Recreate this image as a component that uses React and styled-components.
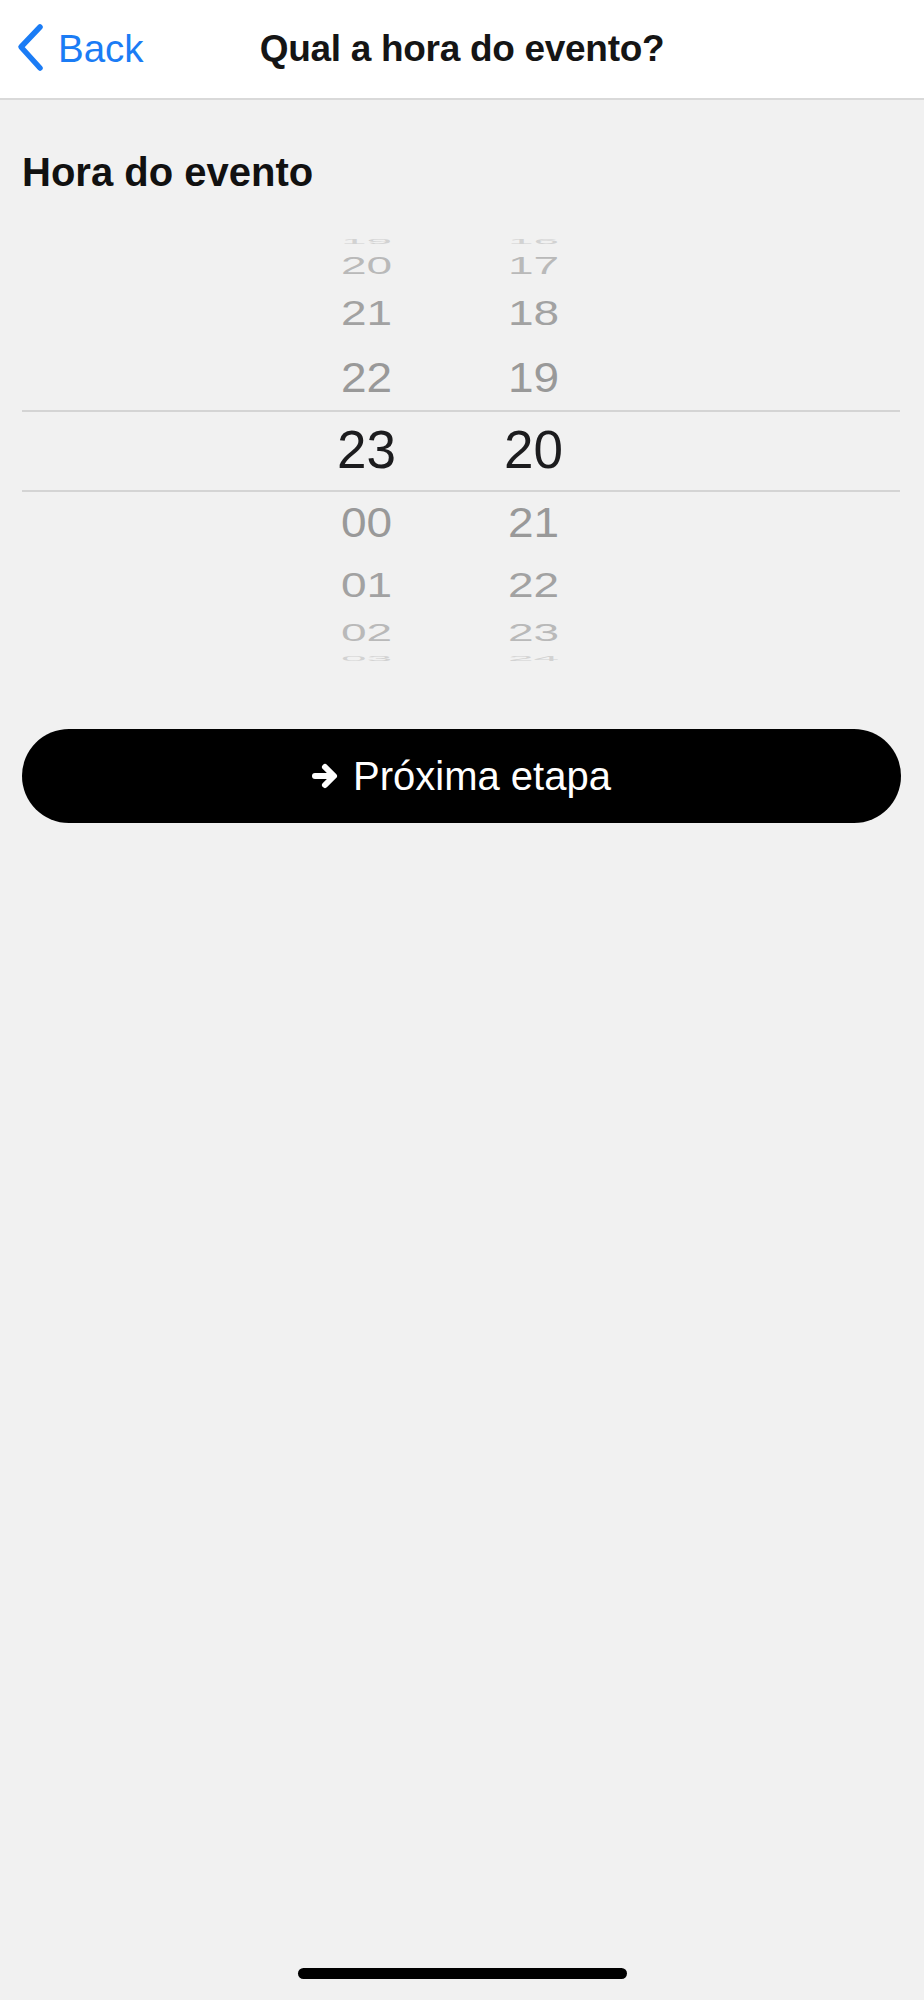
import React from "react";
import styled, { createGlobalStyle } from "styled-components";

const R = 215;
const STEP = 20;
const rad = (d) => (d * Math.PI) / 180;
const clamp = (v) => Math.max(-90, Math.min(90, v));

const hours = ["19", "20", "21", "22", "23", "00", "01", "02", "03"];
const minutes = ["16", "17", "18", "19", "20", "21", "22", "23", "24"];
const shades = ["#1c1c1e", "#999999", "#a2a2a2", "#b9b9b9", "#d2d2d2"];

export default function App() {
  const renderWheel = (values) =>
    values.map((v, idx) => {
      const i = idx - 4;
      const top = R * Math.sin(rad(clamp((i - 0.5) * STEP)));
      const bottom = R * Math.sin(rad(clamp((i + 0.5) * STEP)));
      const h = bottom - top;
      const tilt = Math.cos(rad(i * STEP));
      return (
        <WheelItem
          key={v}
          $selected={i === 0}
          $color={shades[Math.abs(i)]}
          style={{ height: h, lineHeight: h + "px", transform: `scaleY(${tilt})` }}
        >
          {v}
        </WheelItem>
      );
    });

  return (
    <>
      <GlobalStyle />
      <Screen>
        <NavBar>
          <BackButton>
            <svg width="30" height="50" viewBox="0 0 30 50">
              <polyline points="25,4 6,24 25,45" fill="none" stroke="#1b7cf5" strokeWidth="5.5" strokeLinecap="round" strokeLinejoin="round" />
            </svg>
            <span>Back</span>
          </BackButton>
          <NavTitle>Qual a hora do evento?</NavTitle>
          <div />
        </NavBar>

        <SectionTitle>Hora do evento</SectionTitle>

        <Picker>
          <SelectionBand />
          <Wheels>
            <Wheel>{renderWheel(hours)}</Wheel>
            <Wheel>{renderWheel(minutes)}</Wheel>
          </Wheels>
        </Picker>

        <NextButton>
          <svg width="27" height="28" viewBox="0 0 27 28">
            <line x1="3" y1="14" x2="20" y2="14" stroke="#ffffff" strokeWidth="6" strokeLinecap="round" />
            <polyline points="13,5 22,14 13,23" fill="none" stroke="#ffffff" strokeWidth="6" strokeLinecap="round" strokeLinejoin="round" />
          </svg>
          <span>Próxima etapa</span>
        </NextButton>

        <HomeIndicator />
      </Screen>
    </>
  );
}

const GlobalStyle = createGlobalStyle`
  body {
    margin: 0;
    background: #f1f1f1;
    font-family: "Liberation Sans", Arial, sans-serif;
  }
`;

const Screen = styled.div`
  display: flex;
  flex-direction: column;
  min-height: 100vh;
  background: #f1f1f1;
`;

const NavBar = styled.header`
  display: grid;
  grid-template-columns: 1fr auto 1fr;
  align-items: center;
  height: 98px;
  background: #ffffff;
  border-bottom: 2px solid #d9d9d9;
`;

const BackButton = styled.div`
  display: flex;
  align-items: center;
  gap: 13px;
  padding-left: 15px;
  color: #1b7cf5;
  font-size: 38.5px;

  svg {
    margin-top: -2px;
  }
`;

const NavTitle = styled.h1`
  margin: 0;
  font-size: 37px;
  font-weight: 700;
  color: #151515;
  letter-spacing: -0.3px;
`;

const SectionTitle = styled.h2`
  margin: 49px 0 0 22px;
  font-size: 40px;
  line-height: 46px;
  font-weight: 700;
  color: #111111;
`;

const Picker = styled.div`
  position: relative;
  margin: 40px 24px 0 22px;
  height: 430px;
`;

const SelectionBand = styled.div`
  position: absolute;
  left: 0;
  right: 0;
  top: 175px;
  height: 78px;
  border-top: 2px solid #d4d4d4;
  border-bottom: 2px solid #d4d4d4;
`;

const Wheels = styled.div`
  display: flex;
  justify-content: center;
  gap: 47px;
  padding-right: 22px;
`;

const Wheel = styled.div`
  display: flex;
  flex-direction: column;
  width: 120px;
`;

const WheelItem = styled.div`
  text-align: center;
  white-space: nowrap;
  font-size: ${(p) => (p.$selected ? "53px" : "46px")};
  color: ${(p) => p.$color};
  transform-origin: center;
`;

const NextButton = styled.button`
  display: flex;
  align-items: center;
  justify-content: center;
  gap: 14px;
  margin: 64px 23px 0 22px;
  height: 94px;
  border: none;
  border-radius: 47px;
  background: #000000;
  color: #ffffff;
  font-family: "Liberation Sans", Arial, sans-serif;
  font-size: 40px;
  cursor: pointer;
`;

const HomeIndicator = styled.div`
  align-self: center;
  margin-top: auto;
  margin-bottom: 21px;
  width: 329px;
  height: 11px;
  border-radius: 6px;
  background: #000000;
`;
